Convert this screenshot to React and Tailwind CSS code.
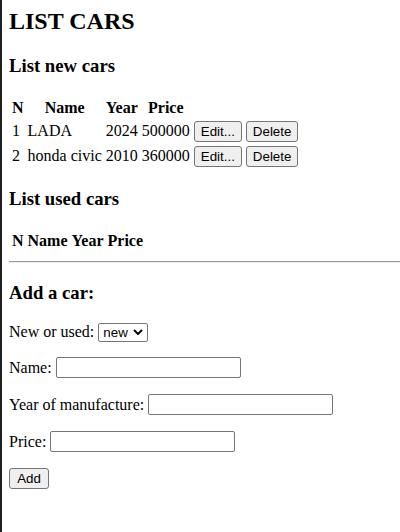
import React from 'react';

const NEW_CARS = [
    { n: 1, name: 'LADA', year: 2024, price: 500000 },
    { n: 2, name: 'honda civic', year: 2010, price: 360000 },
];

const btn = "bg-[#efefef] border border-[#767676] rounded-[3px] px-[6px] py-[2px] text-[13.33px] leading-[normal] font-['Liberation_Sans',Arial,sans-serif] text-black";
const input = "w-[185px] h-[21px] bg-white border border-[#767676] rounded-[2px] px-[2px] text-[13.33px] font-['Liberation_Sans',Arial,sans-serif]";

const CarTable = ({ cars }) => (
    <table className="border-separate border-spacing-[2px]">
        <thead>
            <tr>
                <th className="p-[1px] font-bold text-center">N</th>
                <th className="p-[1px] font-bold text-center">Name</th>
                <th className="p-[1px] font-bold text-center">Year</th>
                <th className="p-[1px] font-bold text-center">Price</th>
            </tr>
        </thead>
        <tbody>
            {cars.map((car) => (
                <tr key={car.n}>
                    <td className="p-[1px]">{car.n}</td>
                    <td className="p-[1px]">{car.name}</td>
                    <td className="p-[1px]">{car.year}</td>
                    <td className="p-[1px]">{car.price}</td>
                    <td className="p-[1px]">
                        <button className={btn}>Edit...</button>{' '}
                        <button className={btn}>Delete</button>
                    </td>
                </tr>
            ))}
        </tbody>
    </table>
);

export default function App() {
    return (
        <div className="min-h-[532px] bg-white border-l-2 border-[#1f1f1f] pl-[7px] pt-[8px] text-[16px] leading-[normal] text-black font-['Liberation_Serif','Times_New_Roman',serif]">
            <h2 className="text-[24px] font-bold mb-[19.92px]">LIST CARS</h2>

            <h3 className="text-[18.72px] font-bold mb-[18.72px]">List new cars</h3>
            <CarTable cars={NEW_CARS} />

            <h3 className="text-[18.72px] font-bold my-[18.72px]">List used cars</h3>
            <CarTable cars={[]} />

            <hr className="my-[8px] border-t border-b border-t-[#9a9a9a] border-b-[#eeeeee] h-0" />

            <h3 className="text-[18.72px] font-bold mt-[18.72px] mb-[18.5px]">Add a car:</h3>

            <form className="flex flex-col" onSubmit={(e) => e.preventDefault()}>
                <div className="flex items-center gap-[4px] h-[20px] mb-[15px]">
                    <span>New or used:</span>
                    <div className="relative">
                        <select className="appearance-none w-[50px] h-[19px] bg-white border border-[#767676] rounded-[2px] pl-[4px] text-[13.33px] leading-[normal] font-['Liberation_Sans',Arial,sans-serif]">
                            <option>new</option>
                            <option>used</option>
                        </select>
                        <svg className="absolute right-[5px] top-[6px] pointer-events-none" width="10" height="6" viewBox="0 0 10 6">
                            <path d="M1 1 L5 5 L9 1" fill="none" stroke="#000" strokeWidth="2" />
                        </svg>
                    </div>
                </div>
                <div className="flex items-center gap-[4px] h-[21px] mb-[16px]">
                    <span>Name:</span>
                    <input className={input} type="text" />
                </div>
                <div className="flex items-center gap-[4px] h-[21px] mb-[16px]">
                    <span>Year of manufacture:</span>
                    <input className={input} type="text" />
                </div>
                <div className="flex items-center gap-[4px] h-[21px] mb-[16px]">
                    <span>Price:</span>
                    <input className={input} type="text" />
                </div>
                <div className="flex">
                    <button className={btn + " h-[21px] w-[40px]"}>Add</button>
                </div>
            </form>
        </div>
    );
}
